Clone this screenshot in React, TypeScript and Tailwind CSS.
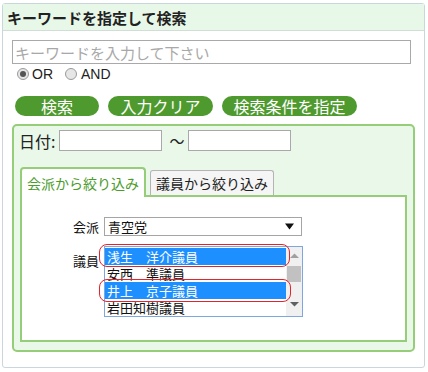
import React from "react";

const jp = { fontFamily: '"Noto Sans CJK JP", "Noto Sans", sans-serif' };
const lat = { fontFamily: '"Liberation Sans", Arial, sans-serif' };

function Radio({ checked }: { checked?: boolean }) {
  return (
    <span className="w-[12px] h-[12px] rounded-full border border-[#9a9a9a] bg-[#e6e6e6] flex items-center justify-center">
      {checked && <span className="w-[6px] h-[6px] rounded-full bg-[#555]" />}
    </span>
  );
}

export default function App() {
  const items = [
    { t: "浅生　洋介議員", s: true },
    { t: "安西　準議員", s: false },
    { t: "井上　京子議員", s: true },
    { t: "岩田知樹議員", s: false },
  ];
  return (
    <div className="w-[428px] h-[372px] bg-white pl-[2px] pt-[3px]" style={jp}>
      <div className="w-[423px] h-[365px] border border-[#c9d7dc] rounded-[3px] flex flex-col">
        <div className="h-[27px] bg-[#e8f8e8] border-b border-[#d3ddd8] flex items-center pl-[4px] text-[15px] font-bold text-[#222] leading-none">
          キーワードを指定して検索
        </div>
        <div className="pl-[9px] pt-[9px] flex flex-col">
          <div className="w-[399px] h-[24px] border border-[#a9a9a9] flex items-center pl-[2px] text-[15px] text-[#a8a8a8] leading-none">
            キーワードを入力して下さい
          </div>
          <div className="h-[16px] mt-[2px] flex items-center pl-[5px] text-[14px] text-[#222] leading-none" style={lat}>
            <Radio checked />
            <span className="ml-[3px]">OR</span>
            <span className="ml-[12px]"><Radio /></span>
            <span className="ml-[4px]">AND</span>
          </div>
          <div className="mt-[14px] ml-[3px] flex gap-[9px] h-[20px]">
            {[
              ["検索", "w-[84px]"],
              ["入力クリア", "w-[105px]"],
              ["検索条件を指定", "w-[135px]"],
            ].map(([t, w]) => (
              <div
                key={t}
                className={`${w} h-[20px] rounded-full bg-[#4f9a2f] text-white text-[16px] leading-none flex items-center justify-center`}
              >
                {t}
              </div>
            ))}
          </div>
          <div className="mt-[8px] w-[403px] h-[228px] border-2 border-[#96cd78] rounded-[5px] bg-[#e9f8e9] flex flex-col">
            <div className="flex items-center pl-[5px] pt-[3px] h-[26px] text-[16px] text-[#222] leading-none">
              <span>日付:</span>
              <span className="ml-[4px] w-[103px] h-[21px] border border-[#a9a9a9] bg-white" />
              <span className="ml-[7px] w-[19px] text-[15px]">〜</span>
              <span className="w-[103px] h-[21px] border border-[#a9a9a9] bg-white" />
            </div>
            <div className="ml-[6px] mt-[15px] flex items-end h-[30px] relative z-10">
              <div className="w-[126px] h-[30px] border-2 border-b-0 border-[#96cd78] rounded-t-[4px] bg-white text-[#4a9c2c] text-[14px] leading-none flex items-center justify-center pb-[1px]">
                会派から絞り込み
              </div>
              <div className="ml-[4px] mb-[2px] w-[124px] h-[25px] border border-b-0 border-[#b4b4b4] rounded-t-[3px] bg-[#f5f5f5] text-[#222] text-[14px] leading-none flex items-center justify-center">
                議員から絞り込み
              </div>
            </div>
            <div className="ml-[6px] -mt-[2px] w-[387px] h-[147px] border-2 border-[#96cd78] bg-white flex flex-col pl-[51px] pt-[20px] text-[13px] text-[#111] leading-none">
              <div className="flex items-center h-[19px]">
                <span className="w-[31px]">会派</span>
                <div className="w-[198px] h-[19px] border border-[#a5a5a5] bg-white flex items-center justify-between pl-[3px] pr-[7px]">
                  <span>青空党</span>
                  <svg width="9" height="7" viewBox="0 0 9 7">
                    <path d="M0 0.5 L9 0.5 L4.5 6.5 Z" fill="#111" />
                  </svg>
                </div>
              </div>
              <div className="flex mt-[10px]">
                <span className="w-[31px] pt-[8px]">議員</span>
                <div className="relative">
                  <div className="w-[199px] h-[71px] border border-[#7fa7df] bg-white flex pt-[1px]">
                    <div className="flex-1 flex flex-col">
                      {items.map((it) => (
                        <div
                          key={it.t}
                          className={`h-[17px] leading-[17px] overflow-hidden flex items-center pl-[2px] ${it.s ? "bg-[#1e8fff] text-white" : ""}`}
                        >
                          {it.t}
                        </div>
                      ))}
                    </div>
                    <div className="w-[16px] -mt-[1px] h-[69px] bg-[#f0f0f0] flex flex-col items-center">
                      <svg width="9" height="6" viewBox="0 0 9 6" className="mt-[6px]">
                        <path d="M0 5 L4.5 0.5 L9 5 Z" fill="#a0a0a0" />
                      </svg>
                      <div className="mt-[7px] w-[14px] h-[16px] bg-[#c1c1c1]" />
                      <svg width="9" height="6" viewBox="0 0 9 6" className="mt-[19px]">
                        <path d="M0 1 L4.5 5.5 L9 1 Z" fill="#606060" />
                      </svg>
                    </div>
                  </div>
                  <div className="absolute left-[-5px] top-[-2px] w-[191px] h-[23px] border-[1.5px] border-[#e5232a] rounded-[8px]" />
                  <div className="absolute left-[-5px] top-[33px] w-[192px] h-[23px] border-[1.5px] border-[#e5232a] rounded-[8px]" />
                </div>
              </div>
            </div>
          </div>
        </div>
      </div>
    </div>
  );
}
